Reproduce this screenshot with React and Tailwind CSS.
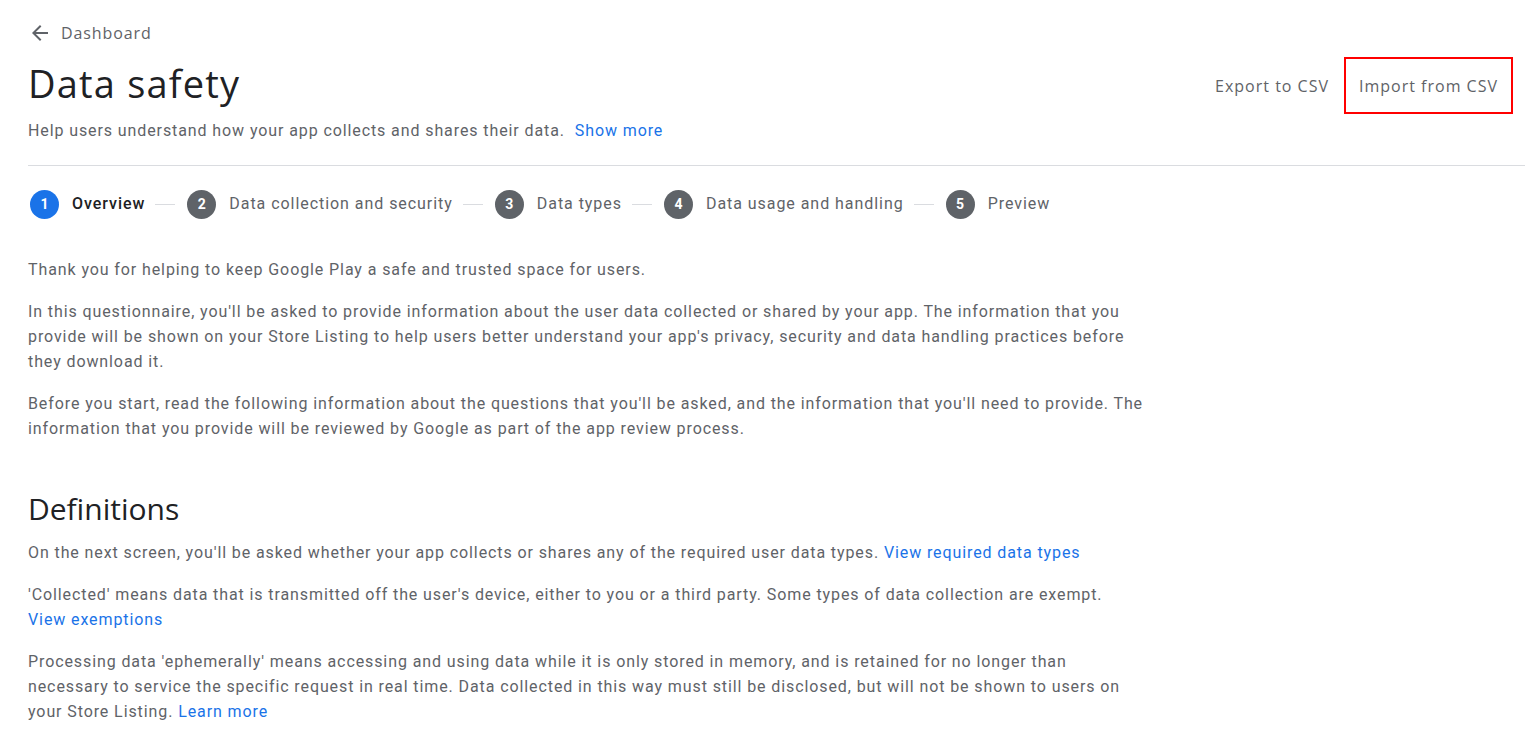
const steps = [
  { n: 1, label: "Overview" },
  { n: 2, label: "Data collection and security" },
  { n: 3, label: "Data types" },
  { n: 4, label: "Data usage and handling" },
  { n: 5, label: "Preview" },
];

const heading = { fontFamily: '"Open Sans", "Noto Sans", sans-serif' };

function Link({ children }) {
  return <a className="text-[#1a73e8] cursor-pointer whitespace-nowrap">{children}</a>;
}

function BackArrow() {
  return (
    <svg viewBox="0 0 24 24" className="w-[24px] h-[24px]" fill="#5f6368">
      <path d="M20 11H7.83l5.59-5.59L12 4l-8 8 8 8 1.41-1.41L7.83 13H20v-2z" />
    </svg>
  );
}

export default function App() {
  return (
    <div
      className="min-h-screen bg-white pl-[28px] pt-[22px] text-[#5f6368] tracking-[0.9px]"
      style={{ fontFamily: 'Roboto, "Liberation Sans", sans-serif' }}
    >
      {/* Back link */}
      <div className="flex items-center h-[22px]">
        <BackArrow />
        <span className="ml-[9px] text-[16px] font-medium text-[#5f6368] tracking-[0.9px]" style={heading}>
          Dashboard
        </span>
      </div>

      {/* Header */}
      <div className="flex items-center justify-between mt-[17px] h-[44px] pr-[12px]">
        <h1
          className="text-[38px] leading-[44px] text-[#202124] font-normal tracking-[1.2px]"
          style={heading}
        >
          Data safety
        </h1>
        <div
          className="flex items-center mt-[5px] text-[16px] font-medium text-[#5f6368] tracking-[1px]"
          style={heading}
        >
          <button className="px-[15px] h-[36px]">Export to CSV</button>
          <button className="border-2 border-[#ff0000] h-[57px] px-[13px]">Import from CSV</button>
        </div>
      </div>

      <p className="mt-[14px] text-[16px] leading-[24px]">
        Help users understand how your app collects and shares their data.{" "}
        <span className="ml-[5px]">
          <Link>Show more</Link>
        </span>
      </p>

      <div className="mt-[22px] h-px bg-[#dadce0]" />

      {/* Stepper */}
      <div className="flex items-center mt-[23px] ml-[2px] h-[30px]">
        {steps.map((s, i) => (
          <div key={s.n} className="flex items-center">
            <span
              className={[
                "w-[29px] h-[29px] rounded-full flex items-center justify-center text-white text-[14px] font-bold tracking-normal",
                i === 0 ? "bg-[#1a73e8]" : "bg-[#5f6368]",
              ].join(" ")}
            >
              {s.n}
            </span>
            <span
              className={[
                "ml-[13px] text-[16px] tracking-[0.95px]",
                i === 0 ? "text-[#202124] font-medium" : "text-[#5f6368]",
              ].join(" ")}
            >
              {s.label}
            </span>
            {i < steps.length - 1 ? (
              <span className="ml-[10px] mr-[12px] w-[20px] h-px bg-[#dadce0]" />
            ) : null}
          </div>
        ))}
      </div>

      {/* Overview text */}
      <div className="w-[1119px] mt-[38px] text-[16px] leading-[25px] space-y-[17px]">
        <p>Thank you for helping to keep Google Play a safe and trusted space for users.</p>
        <p>
          In this questionnaire, you'll be asked to provide information about the user data collected or
          shared by your app. The information that you provide will be shown on your Store Listing to help
          users better understand your app's privacy, security and data handling practices before they
          download it.
        </p>
        <p>
          Before you start, read the following information about the questions that you'll be asked, and the
          information that you'll need to provide. The information that you provide will be reviewed by Google
          as part of the app review process.
        </p>
      </div>

      <h2
        className="mt-[50px] text-[30px] leading-[36px] text-[#202124] font-medium tracking-normal"
        style={heading}
      >
        Definitions
      </h2>

      <div className="w-[1119px] mt-[13px] text-[16px] leading-[25px] space-y-[17px] pb-[20px]">
        <p>
          On the next screen, you'll be asked whether your app collects or shares any of the required user data
          types. <Link>View required data types</Link>
        </p>
        <p>
          'Collected' means data that is transmitted off the user's device, either to you or a third party. Some
          types of data collection are exempt. <Link>View exemptions</Link>
        </p>
        <p>
          Processing data 'ephemerally' means accessing and using data while it is only stored in memory, and is
          retained for no longer than necessary to service the specific request in real time. Data collected in
          this way must still be disclosed, but will not be shown to users on your Store Listing.{" "}
          <Link>Learn more</Link>
        </p>
      </div>
    </div>
  );
}
